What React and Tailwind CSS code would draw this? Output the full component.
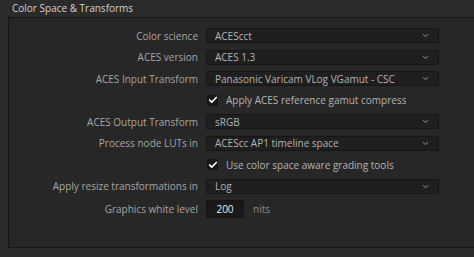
import { ChevronDown, Check } from 'lucide-react';

function Select({ value }) {
  return (
    <div className="flex items-center justify-between w-[233px] h-[15px] pl-[8px] pr-[8px] bg-[#1f1f1f] border border-[#161616] rounded-[2px] text-[#b4b4b4]">
      <span className="leading-none">{value}</span>
      <ChevronDown className="w-[9px] h-[9px] text-[#9a9a9a]" strokeWidth={2.5} />
    </div>
  );
}

function Row({ label, children }) {
  return (
    <div className="flex items-center h-[21.5px]">
      <div className="w-[197px] pr-[8px] text-right text-[#a6a6a6] leading-none">{label}</div>
      {children}
    </div>
  );
}

function CheckRow({ label }) {
  return (
    <div className="flex items-center h-[21.5px]">
      <div className="w-[198px]" />
      <div className="flex items-center gap-[8px]">
        <div className="w-[11px] h-[11px] bg-[#161616] rounded-[1px] flex items-center justify-center">
          <Check className="w-[10px] h-[10px] text-white" strokeWidth={4} />
        </div>
        <span className="text-[#b4b4b4] leading-none">{label}</span>
      </div>
    </div>
  );
}

export default function App() {
  return (
    <div
      className="w-[474px] h-[257px] bg-[#2a2a2a] overflow-hidden text-[10px]"
      style={{ fontFamily: '"Open Sans", "Noto Sans", sans-serif' }}
    >
      {/* Header */}
      <div className="h-[17px] pl-[12px] flex items-center text-[10px] text-[#d2d2d2]">
        Color Space &amp; Transforms
      </div>

      {/* Panel */}
      <div className="ml-[8px] h-[231px] bg-[#272727] border-t border-l border-b border-[#161616] pt-[7px]">
        <Row label="Color science">
          <Select value="ACEScct" />
        </Row>
        <Row label="ACES version">
          <Select value="ACES 1.3" />
        </Row>
        <Row label="ACES Input Transform">
          <Select value="Panasonic Varicam VLog VGamut - CSC" />
        </Row>
        <CheckRow label="Apply ACES reference gamut compress" />
        <Row label="ACES Output Transform">
          <Select value="sRGB" />
        </Row>
        <Row label="Process node LUTs in">
          <Select value="ACEScc AP1 timeline space" />
        </Row>
        <CheckRow label="Use color space aware grading tools" />
        <Row label="Apply resize transformations in">
          <Select value="Log" />
        </Row>
        <div className="flex items-center h-[24px]">
          <div className="w-[197px] pr-[8px] text-right text-[#a6a6a6] leading-none">
            Graphics white level
          </div>
          <div className="w-[38px] h-[18px] bg-[#191919] border border-[#141414] flex items-center justify-center text-[#ececec] leading-none">
            200
          </div>
          <span className="ml-[9px] text-[#8c8c8c] leading-none">nits</span>
        </div>
      </div>
    </div>
  );
}
